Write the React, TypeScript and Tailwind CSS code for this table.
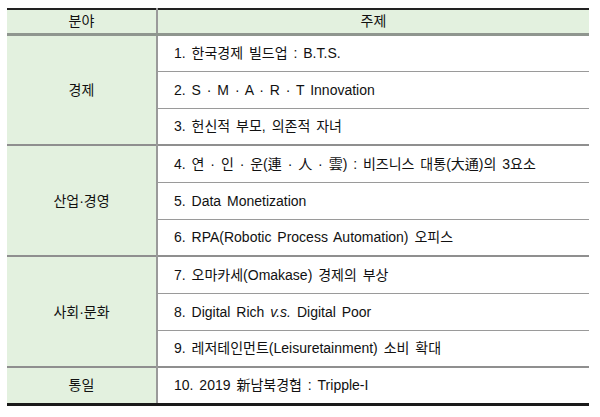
import type { ReactNode } from "react";

type Group = {
  field: string;
  topics: ReactNode[];
};

const groups: Group[] = [
  {
    field: "경제",
    topics: [
      "1. 한국경제 빌드업 : B.T.S.",
      "2. S · M · A · R · T Innovation",
      "3. 헌신적 부모, 의존적 자녀",
    ],
  },
  {
    field: "산업·경영",
    topics: [
      "4. 연 · 인 · 운(連 · 人 · 雲) : 비즈니스 대통(大通)의 3요소",
      "5. Data Monetization",
      "6. RPA(Robotic Process Automation) 오피스",
    ],
  },
  {
    field: "사회·문화",
    topics: [
      "7. 오마카세(Omakase) 경제의 부상",
      <>
        8. Digital Rich <i>v.s.</i> Digital Poor
      </>,
      "9. 레저테인먼트(Leisuretainment) 소비 확대",
    ],
  },
  {
    field: "통일",
    topics: ["10. 2019 新남북경협 : Tripple-I"],
  },
];

export default function App() {
  return (
    <div
      className="min-h-[417px] w-[600px] bg-white pl-[7px] pt-[8px] text-[14px] leading-none text-[#111]"
      style={{ fontFamily: '"Liberation Sans", "Noto Sans CJK KR", sans-serif' }}
    >
      <table className="w-[582px] border-collapse">
        <thead>
          <tr className="h-[25px] border-t-2 border-b-[3px] border-t-[#222] border-b-[#8f968f] bg-[#e3f1df]">
            <th className="w-[150px] border-r-2 border-[#9a9a9a] p-0 text-center font-normal">
              분야
            </th>
            <th className="p-0 text-center font-normal">주제</th>
          </tr>
        </thead>
        <tbody>
          {groups.map((g, gi) =>
            g.topics.map((t, ti) => (
              <tr
                key={`${gi}-${ti}`}
                className={
                  ti === 0 && gi > 0
                    ? "h-[37px] border-t-2 border-[#8f8f8f]"
                    : "h-[37px]"
                }
              >
                {ti === 0 && (
                  <td
                    rowSpan={g.topics.length}
                    className="border-r-2 border-[#9a9a9a] bg-[#e3f1df] p-0 text-center"
                  >
                    {g.field}
                  </td>
                )}
                <td
                  className={
                    ti > 0
                      ? "border-t border-[#9a9a9a] p-0 pl-[16px] [word-spacing:2px]"
                      : "p-0 pl-[16px] [word-spacing:2px]"
                  }
                >
                  {t}
                </td>
              </tr>
            )),
          )}
          <tr className="border-t-[3px] border-[#1a1a1a]">
            <td colSpan={2} className="h-0 p-0" />
          </tr>
        </tbody>
      </table>
    </div>
  );
}
